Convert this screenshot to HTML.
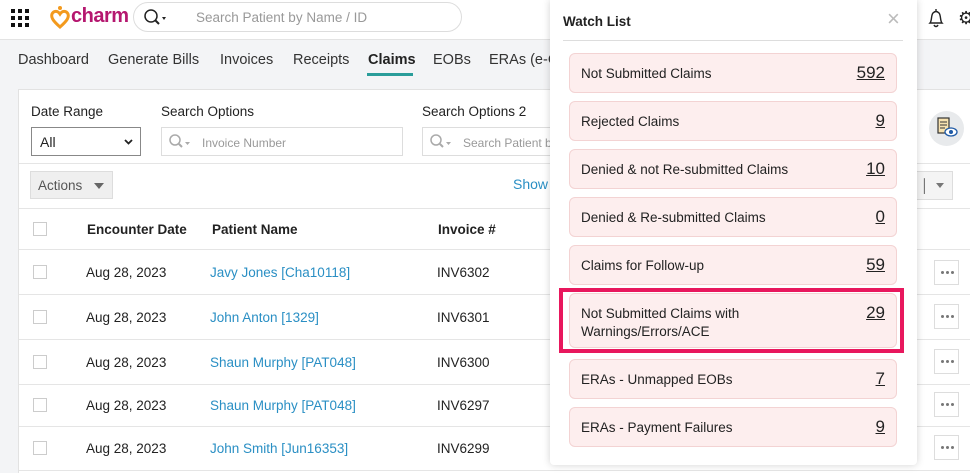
<!DOCTYPE html>
<html><head><style>
*{box-sizing:border-box;margin:0;padding:0}
html,body{width:970px;height:473px;overflow:hidden}
body{background:#f3f4f6;font-family:"Liberation Sans",sans-serif;color:#222;position:relative;font-size:14px}
.hdr{position:absolute;left:0;top:0;width:970px;height:40px;background:#fff;border-bottom:1px solid #e3e3e3}
.abs{position:absolute}
.nav span{position:absolute;top:52px;font-size:14.5px;color:#333}
.card{position:absolute;left:18px;top:89px;width:960px;height:400px;background:#fff;border:1px solid #e2e2e2}
.lbl{position:absolute;font-size:13.5px;color:#222}
.inp{position:absolute;height:29px;border:1px solid #ddd;background:#fff;font-size:12px;color:#999;padding:8px 0 0 40px;white-space:nowrap;overflow:hidden}
.row{position:absolute;left:19px;width:960px;border-top:1px solid #e5e5e5}
.cb{position:absolute;left:33px;width:14px;height:14px;border:1px solid #ccc;background:#fff}
.td{position:absolute;font-size:13.5px;color:#222;white-space:nowrap}
.lnk{color:#2a8fc4}
.dots{position:absolute;left:934px;width:25px;height:25px;border:1px solid #ddd;background:#fff}
.dots:after{content:"";position:absolute;left:6px;top:10px;width:3px;height:3px;border-radius:50%;background:#777;box-shadow:5px 0 #777,10px 0 #777}
.panel{position:absolute;left:550px;top:0;width:367px;height:465px;background:#fff;box-shadow:0 0 8px rgba(0,0,0,.18);border-radius:0 0 4px 4px}
.it{position:absolute;left:19px;width:328px;height:40px;background:#fdeeee;border:1px solid #f3d3d3;border-radius:6px;font-size:13.5px;color:#222}
.it .t{position:absolute;left:11px;top:12px}
.it .n{position:absolute;right:11px;top:9px;font-size:17px;text-decoration:underline}
</style></head><body>
<div class="hdr"></div>
<svg class="abs" style="left:11px;top:9px" width="20" height="18"><g fill="#111"><rect x="0" y="0" width="4" height="4"/><rect x="7" y="0" width="4" height="4"/><rect x="14" y="0" width="4" height="4"/><rect x="0" y="7" width="4" height="4"/><rect x="7" y="7" width="4" height="4"/><rect x="14" y="7" width="4" height="4"/><rect x="0" y="14" width="4" height="4"/><rect x="7" y="14" width="4" height="4"/><rect x="14" y="14" width="4" height="4"/></g></svg>
<svg class="abs" style="left:50px;top:5px" width="20" height="24"><circle cx="10" cy="3" r="2" fill="#f39a1e"/><path d="M10 22 C2 15 1 12 2 9 C4 5 8 6 10 9 C12 6 16 5 18 9 C19 12 18 15 10 22Z" fill="none" stroke="#f39a1e" stroke-width="3"/></svg>
<div class="abs" style="left:71px;top:5px;font-size:20px;font-weight:bold;color:#b5176f;letter-spacing:-0.5px">charm</div>
<div class="abs" style="left:133px;top:2px;width:329px;height:30px;border:1px solid #ddd;border-radius:16px;background:#fff"></div>
<svg class="abs" style="left:143px;top:8px" width="26" height="18"><circle cx="8" cy="8" r="6" fill="none" stroke="#222" stroke-width="1.5"/><path d="M12 12 L16 16" stroke="#222" stroke-width="2"/><path d="M19 9 L23 9 L21 12Z" fill="#222"/></svg>
<div class="abs" style="left:196px;top:10px;font-size:13.5px;color:#999">Search Patient by Name / ID</div>
<svg class="abs" style="left:926px;top:7px" width="20" height="22"><path d="M10 2 V4 M4 16 C6 14 5 8 7 6 C9 4 11 4 13 6 C15 8 14 14 16 16 Z M8 18 C9 20 11 20 12 18" fill="none" stroke="#222" stroke-width="1.4"/></svg>
<div class="abs" style="left:958px;top:8px;font-size:18px;color:#222">⚙</div>
<div class="nav"><span style="left:18px">Dashboard</span><span style="left:108px">Generate Bills</span><span style="left:220px">Invoices</span><span style="left:293px">Receipts</span><span style="left:368px;font-weight:bold;color:#222">Claims</span><span style="left:433px">EOBs</span><span style="left:489px">ERAs (e-C</span></div>
<div class="abs" style="left:367px;top:73px;width:46px;height:3px;background:#2a9d9a"></div>
<div class="card"></div>
<div class="lbl" style="left:31px;top:104px">Date Range</div>
<div class="lbl" style="left:161px;top:104px">Search Options</div>
<div class="lbl" style="left:422px;top:104px">Search Options 2</div>
<div class="abs" style="left:31px;top:127px;width:110px;height:29px;border:1px solid #888;background:#fff;font-size:14px;padding:6px 0 0 8px">All<svg style="position:absolute;right:7px;top:11px" width="9" height="6"><path d="M1 1 L4.5 4.5 L8 1" fill="none" stroke="#222" stroke-width="1.8"/></svg></div>
<div class="inp" style="left:161px;top:127px;width:242px">Invoice Number</div>
<div class="inp" style="left:422px;top:127px;width:130px">Search Patient b</div>
<svg class="abs" style="left:169px;top:134px" width="26" height="16"><circle cx="6" cy="6" r="5" fill="none" stroke="#aaa" stroke-width="1.5"/><path d="M10 10 L13 13" stroke="#aaa" stroke-width="2"/><path d="M16 8 L21 8 L18.5 11Z" fill="#aaa"/></svg>
<svg class="abs" style="left:430px;top:134px" width="26" height="16"><circle cx="6" cy="6" r="5" fill="none" stroke="#aaa" stroke-width="1.5"/><path d="M10 10 L13 13" stroke="#aaa" stroke-width="2"/><path d="M16 8 L21 8 L18.5 11Z" fill="#aaa"/></svg>
<div class="row" style="top:163px"></div>
<div class="abs" style="left:30px;top:171px;width:83px;height:28px;background:#efefef;border:1px solid #ddd;font-size:13.5px;color:#555;padding:6px 0 0 7px">Actions</div>
<svg class="abs" style="left:94px;top:183px" width="10" height="6"><path d="M0 0H10L5 6Z" fill="#666"/></svg>
<div class="abs" style="left:513px;top:176px;font-size:14px;color:#2a8fc4">Show</div>
<div class="abs" style="left:905px;top:171px;width:48px;height:29px;border:1px solid #ddd;background:#f4f4f4;font-size:13px;color:#555;padding:6px 0 0 4px">n │</div>
<svg class="abs" style="left:936px;top:183px" width="8" height="5"><path d="M0 0H8L4 5Z" fill="#777"/></svg>
<div class="abs" style="left:929px;top:111px;width:35px;height:35px;border-radius:50%;background:#e8eaec"></div>
<svg class="abs" style="left:936px;top:117px" width="22" height="22"><rect x="2" y="1" width="11" height="15" fill="#f7e2b0" stroke="#333" stroke-width="1.2"/><path d="M4 5H11M4 8H11M4 11H9" stroke="#333"/><ellipse cx="15" cy="15" rx="6" ry="4" fill="#fff" stroke="#1f5aa6" stroke-width="1.3"/><circle cx="15" cy="15" r="2" fill="#1f5aa6"/></svg>
<div class="row" style="top:208px"></div>
<div class="cb" style="top:222px"></div>
<div class="td" style="left:87px;top:222px;font-weight:bold">Encounter Date</div>
<div class="td" style="left:212px;top:222px;font-weight:bold">Patient Name</div>
<div class="td" style="left:438px;top:222px;font-weight:bold">Invoice #</div>
<div class="row" style="top:249px"></div>
<div class="cb" style="top:265px"></div><div class="td" style="left:86px;top:265px">Aug 28, 2023</div><div class="td lnk" style="left:210px;top:265px">Javy Jones [Cha10118]</div><div class="td" style="left:437px;top:265px">INV6302</div><div class="dots" style="top:260px"></div>
<div class="row" style="top:294px"></div>
<div class="cb" style="top:310px"></div><div class="td" style="left:86px;top:310px">Aug 28, 2023</div><div class="td lnk" style="left:210px;top:310px">John Anton [1329]</div><div class="td" style="left:437px;top:310px">INV6301</div><div class="dots" style="top:304px"></div>
<div class="row" style="top:339px"></div>
<div class="cb" style="top:355px"></div><div class="td" style="left:86px;top:355px">Aug 28, 2023</div><div class="td lnk" style="left:210px;top:355px">Shaun Murphy [PAT048]</div><div class="td" style="left:437px;top:355px">INV6300</div><div class="dots" style="top:349px"></div>
<div class="row" style="top:384px"></div>
<div class="cb" style="top:398px"></div><div class="td" style="left:86px;top:398px">Aug 28, 2023</div><div class="td lnk" style="left:210px;top:398px">Shaun Murphy [PAT048]</div><div class="td" style="left:437px;top:398px">INV6297</div><div class="dots" style="top:392px"></div>
<div class="row" style="top:426px"></div>
<div class="cb" style="top:441px"></div><div class="td" style="left:86px;top:441px">Aug 28, 2023</div><div class="td lnk" style="left:210px;top:441px">John Smith [Jun16353]</div><div class="td" style="left:437px;top:441px">INV6299</div><div class="dots" style="top:435px"></div>
<div class="row" style="top:470px"></div>
<div class="panel">
<div class="abs" style="left:13px;top:14px;font-size:13.5px;font-weight:bold">Watch List</div>
<div class="abs" style="left:337px;top:6px;font-size:22px;color:#bbb">×</div>
<div class="abs" style="left:13px;top:40px;width:340px;height:1px;background:#ddd"></div>
<div class="it" style="top:53px"><span class="t">Not Submitted Claims</span><span class="n">592</span></div>
<div class="it" style="top:101px"><span class="t">Rejected Claims</span><span class="n">9</span></div>
<div class="it" style="top:149px"><span class="t">Denied &amp; not Re-submitted Claims</span><span class="n">10</span></div>
<div class="it" style="top:197px"><span class="t">Denied &amp; Re-submitted Claims</span><span class="n">0</span></div>
<div class="it" style="top:245px"><span class="t">Claims for Follow-up</span><span class="n">59</span></div>
<div class="abs" style="left:9px;top:288px;width:345px;height:65px;border:4px solid #e8175d"></div>
<div class="it" style="top:293px;height:55px"><span class="t" style="top:11px;line-height:18px">Not Submitted Claims with<br>Warnings/Errors/ACE</span><span class="n">29</span></div>
<div class="it" style="top:359px"><span class="t">ERAs - Unmapped EOBs</span><span class="n">7</span></div>
<div class="it" style="top:407px"><span class="t">ERAs - Payment Failures</span><span class="n">9</span></div>
</div>
</body></html>
